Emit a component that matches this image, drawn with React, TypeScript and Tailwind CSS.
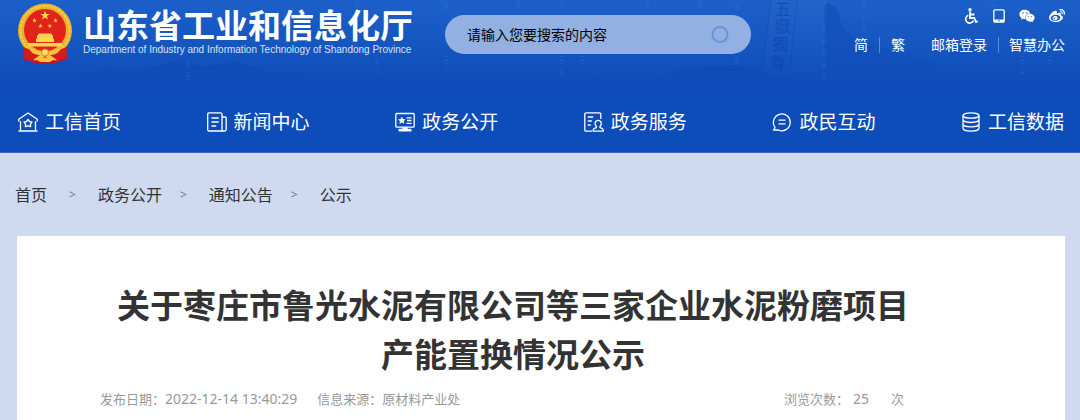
import type { ReactNode } from "react";
import { FaWeibo, FaWeixin } from "react-icons/fa";

const iconProps = {
  viewBox: "0 0 20 20",
  fill: "none",
  stroke: "currentColor",
  strokeWidth: 1.3,
  strokeLinejoin: "round" as const,
  "aria-hidden": true,
  className: "h-5 w-5 shrink-0",
};

const navItems: { label: string; icon: ReactNode }[] = [
  {
    label: "工信首页",
    icon: (
      <svg {...iconProps}>
        <path d="M.7 9.500V7.200L10 1l9.300 6.200v2.300M2.500 9v9.500M17.500 9v9.500M.5 19h19" />
        <path d="m10 7.500 1.500 2 2.500.6-1.600 2 .2 2.600-2.600-.9-2.600.9.2-2.600-1.600-2 2.500-.6z" />
      </svg>
    ),
  },
  {
    label: "新闻中心",
    icon: (
      <svg {...iconProps}>
        <path d="M15 19H2a1.3 1.3 0 0 1-1.3-1.3V1.8A1.2 1.2 0 0 1 2 .8h11.5A1.4 1.4 0 0 1 15 2.2zM15 5h3a1.2 1.2 0 0 1 1.2 1.2v11.3A1.6 1.6 0 0 1 17.7 19H15" />
        <path d="M4.5 6h7.2M4.5 10h7.2M4.5 14h4.7" />
      </svg>
    ),
  },
  {
    label: "政务公开",
    icon: (
      <svg {...iconProps}>
        <rect x=".8" y="1.5" width="18.4" height="13.7" rx="1" />
        <path d="M11.5 5.8h5M12 8.5h4.5M11.5 11.3h5" />
        <path
          d="m6.8 5 1 2.3 2.4.2-1.8 1.6.6 2.4-2.2-1.3-2.1 1.3.5-2.4-1.8-1.6 2.5-.2zM7.5 15.5h5V17h3.7v2.3H3.8V17h3.7z"
          fill="currentColor"
          strokeWidth=".4"
        />
      </svg>
    ),
  },
  {
    label: "政务服务",
    icon: (
      <svg {...iconProps}>
        <path d="M16.8 7V2A1.2 1.2 0 0 0 15.6.8H2A1.2 1.2 0 0 0 .8 2v16A1.2 1.2 0 0 0 2 19.2h6M3.8 5h5.4M3.8 9h4M3.8 13h3" />
        <path d="M12.300 14.300c-2-2-1.400-6 1.900-6s3.900 4 1.900 6c-.6 1 .2 1.600 1.300 1.900 1.300.4 2 1.300 2 3H9c0-1.700.7-2.600 2-3 1.100-.3 1.900-.9 1.300-1.900z" />
      </svg>
    ),
  },
  {
    label: "政民互动",
    icon: (
      <svg {...iconProps}>
        <path d="M3 15.300A8.400 8.400 0 1 1 6.300 18H1.500c.9-.8 1.300-1.600 1.500-2.700zM6.500 8.200h7M6.500 11.800h7" />
      </svg>
    ),
  },
  {
    label: "工信数据",
    icon: (
      <svg {...iconProps}>
        <ellipse cx="10" cy="3.500" rx="8" ry="2.700" />
        <path d="M2 3.500v12.800c0 1.600 3.500 2.900 8 2.900s8-1.300 8-2.900V3.500M2 7.600c0 1.600 3.500 2.900 8 2.900s8-1.300 8-2.900M2 12c0 1.600 3.500 2.900 8 2.900s8-1.300 8-2.900" />
      </svg>
    ),
  },
];

const crumbs = ["政务公开", "通知公告", "公示"];

// faint dashed columns falling through the banner: x, top, bottom
const digitColumns: [number, number, number][] = [
  [188, 60, 84],
  [357, 0, 8],
  [377, 58, 74],
  [446, 2, 12],
  [446, 56, 72],
  [518, 0, 13],
  [562, 0, 12],
  [562, 56, 78],
  [582, 56, 70],
  [647, 0, 13],
  [700, 0, 12],
  [737, 2, 14],
  [737, 56, 66],
  [824, 24, 80],
  [864, 0, 30],
  [993, 0, 6],
  [1022, 56, 74],
  [1050, 56, 64],
];

function BannerBackdrop() {
  return (
    <svg
      className="absolute inset-0 h-full w-full"
      viewBox="0 0 1080 90"
      preserveAspectRatio="xMidYMid slice"
      aria-hidden="true"
    >
      <defs>
        <linearGradient id="hill" x1="0" y1="0" x2="0" y2="1">
          <stop offset="0" stopColor="#0b3fa9" stopOpacity=".4" />
          <stop offset="1" stopColor="#0d4db9" stopOpacity=".1" />
        </linearGradient>
        <linearGradient id="stone" x1="0" y1="0" x2="0" y2="1">
          <stop offset="0" stopColor="#2f6bcb" stopOpacity=".35" />
          <stop offset="1" stopColor="#2f6bcb" stopOpacity="0" />
        </linearGradient>
      </defs>
      <path d="M60 78 105 68l30 3 40-9 28 5 34-5 30 9 38 2 30 8H60z" fill="url(#hill)" />
      <path
        d="M560 84c25 0 22-7 36-7 12 0 20 4 34 4 24 0 40-10 62-13 18-2 40-5 56 0 20 4 34 12 56 16z"
        fill="url(#hill)"
      />
      <path
        d="M824 90V6l4-3 8 4 3 10 4 10 8 8 10 10 30 4 12 8 30 4 16 10 40 19z"
        fill="url(#hill)"
      />
      <path d="M762 76 772 0h54l-2 80z" fill="url(#stone)" />
      <path d="m762 72 9-72M789 80l8-80" stroke="#0b3fa9" opacity=".3" />
      <g
        fill="#0a3da4"
        opacity=".5"
        fontSize="16"
        className="font-['Liberation_Serif','Noto_Sans_CJK_TC',serif]"
      >
        <text x="775" y="15">五</text>
        <text x="774" y="32">嶽</text>
        <text x="772" y="50">獨</text>
        <text x="770" y="69">尊</text>
      </g>
      <g stroke="#5a93e6" strokeWidth="4" strokeDasharray="1 2 3 1 1 4" opacity=".12">
        {digitColumns.map(([x, top, bottom]) => (
          <path key={`${x}-${top}`} d={`M${x} ${top}V${bottom}`} />
        ))}
      </g>
    </svg>
  );
}

const star = "M0-10 2.400-3.200 9.500-3.100 3.800 1.200 5.900 8.100 0 4-5.900 8.100-3.800 1.200-9.500-3.100-2.400-3.200z";

function Emblem() {
  return (
    <svg className="h-[60px] w-[56px] shrink-0" viewBox="0 0 56 60" role="img" aria-label="国徽">
      <path d="M7 44h42l1 13-8 1-3 2H17l-3-2-8-1z" fill="#c8161d" />
      <circle cx="28" cy="27.500" r="27" fill="#e9b12d" />
      <circle cx="28" cy="27.500" r="24.500" fill="none" stroke="#f5cb48" strokeWidth="2" strokeDasharray="3 1" />
      <circle cx="28" cy="27" r="21" fill="#e2231a" />
      <g fill="#fbd84b">
        <path d={star} transform="translate(28 12.500) scale(.5)" />
        <path d={star} transform="translate(17.500 17.500) scale(.24)" />
        <path d={star} transform="translate(38.500 17.500) scale(.24)" />
        <path d={star} transform="translate(23.500 23) scale(.24)" />
        <path d={star} transform="translate(32.800 23) scale(.24)" />
        <path d="m20 33 2-2.500h12l2 2.500v2.500h1V39H19v-3.500h1zM11 40h34v3.500H11z" />
      </g>
      <path d="M6 44c8 2 12 7 22 7s14-5 22-7l-1 10-7 4H14l-7-4z" fill="#d51c1c" />
      <path
        d="M12 45c6 1 9 4 16 4s10-3 16-4c-2 5-6 7-11 7l7 5c-5 1-9-1-12-4-3 3-7 5-12 4l7-5c-5 0-9-2-11-7z"
        fill="#f3c43e"
      />
      <circle cx="28" cy="49.500" r="3.500" fill="#f9dc68" stroke="#cf8f1d" />
      <path d="M20 57q8-5 16 0l-3 2H23z" fill="#f3c43e" />
    </svg>
  );
}

function Divider() {
  return <span className="h-4 w-px bg-[#4b92dc]" />;
}

function TopLinks() {
  return (
    <div className="ml-auto flex flex-col items-end pt-2 text-white">
      <div className="flex h-4 items-center gap-[14px]">
        <a href="#accessible" aria-label="无障碍">
          <svg className="h-4 w-4" viewBox="0 0 14 16" fill="none" stroke="currentColor" aria-hidden="true">
            <circle cx="6" cy="1.700" r="1.700" fill="currentColor" stroke="none" />
            <path d="M6 3.500V10h4.300l1.700 4 1.800-.8M6 6.500h4.500" strokeWidth="1.800" />
            <path d="M4.200 7.200A4.100 4.100 0 1 0 9.500 12.700" strokeWidth="1.600" />
          </svg>
        </a>
        <a href="#mobile" aria-label="移动版">
          <svg className="h-[14px] w-3" viewBox="0 0 12 14" fill="none" stroke="currentColor" aria-hidden="true">
            <rect x=".8" y=".8" width="10.400" height="12.400" rx="1.200" strokeWidth="1.300" />
            <path d="M1 10.500h10v2.500H1z" fill="currentColor" stroke="none" />
            <circle cx="6" cy="11.700" r=".8" fill="#1a5ac4" stroke="none" />
          </svg>
        </a>
        <a href="#wechat" aria-label="微信">
          <FaWeixin className="h-4 w-4" />
        </a>
        <a href="#weibo" aria-label="微博">
          <FaWeibo className="h-4 w-4" />
        </a>
      </div>
      <div className="mt-[11px] flex items-center text-sm leading-5">
        <a href="#jian" className="mr-[11px]">简</a>
        <Divider />
        <a href="#fan" className="mr-[26px] ml-[11px]">繁</a>
        <a href="#mail" className="mr-[11px]">邮箱登录</a>
        <Divider />
        <a href="#office" className="ml-[10px]">智慧办公</a>
      </div>
    </div>
  );
}

function SearchBox() {
  return (
    <form
      role="search"
      onSubmit={(e) => e.preventDefault()}
      className="mt-[15px] ml-8 flex h-[39px] w-[306px] items-center rounded-full bg-[#92b0e2] pr-[21px] pl-[22px]"
    >
      <input
        type="text"
        aria-label="搜索"
        placeholder="请输入您要搜索的内容"
        className="min-w-0 flex-1 bg-transparent text-sm text-black outline-none placeholder:text-black"
      />
      <button type="submit" aria-label="搜索">
        <svg className="h-5 w-5" viewBox="0 0 20 20" fill="none" stroke="#6b93da" strokeWidth="2" aria-hidden="true">
          <circle cx="10" cy="9.500" r="7.500" />
          <path d="m14.500 14.500 2 2" />
        </svg>
      </button>
    </form>
  );
}

export default function App() {
  return (
    <div className="flex min-h-screen flex-col bg-[#cfdaf1] font-['Noto_Sans','Noto_Sans_CJK_SC',sans-serif]">
      <header className="border-b border-[#3566c4] bg-[#0d4db9]">
        {/* Banner */}
        <div className="relative overflow-hidden bg-linear-to-b from-[#1c60c9] to-[#0e4bb8]">
          <BannerBackdrop />
          <div className="relative flex h-[90px] items-start pr-[15px] pl-[17px]">
            <a href="#home" className="flex items-start gap-[10px] pt-[3px] text-white">
              <Emblem />
              <span className="pt-[5px]">
                <span className="block text-[33px] leading-[36px] font-bold">山东省工业和信息化厅</span>
                <span className="block font-['Liberation_Sans',sans-serif] text-[10px] leading-3 text-[#d5e3fa]">
                  Department of Industry and Information Technology of Shandong Province
                </span>
              </span>
            </a>
            <SearchBox />
            <TopLinks />
          </div>
        </div>

        {/* Main nav */}
        <nav className="flex h-[62px] items-center justify-between pt-[2px] pr-4 pl-[18px] text-white">
          {navItems.map((item) => (
            <a key={item.label} href="#nav" className="flex items-center gap-[7px] text-[19px] leading-7">
              {item.icon}
              {item.label}
            </a>
          ))}
        </nav>
      </header>

      {/* Breadcrumb */}
      <nav aria-label="breadcrumb" className="flex h-[83px] items-center gap-[18px] pl-[15px] text-base text-[#333]">
        <a href="#home" className="pr-1">首页</a>
        {crumbs.map((crumb) => (
          <span key={crumb} className="flex items-center gap-[22px]">
            <span className="text-xs text-[#777]">&gt;</span>
            <a href="#crumb">{crumb}</a>
          </span>
        ))}
      </nav>

      {/* Article */}
      <main className="mr-[15px] ml-[17px] flex-1 bg-white pt-[45px] pr-[139px] pb-3 pl-[83px]">
        <h1 className="text-center text-[33px] leading-[49px] font-bold text-[#333]">
          关于枣庄市鲁光水泥有限公司等三家企业水泥粉磨项目
          <br />
          产能置换情况公示
        </h1>
        <div className="mt-[10px] flex items-center pr-[22px] text-[13px] leading-5 text-[#999]">
          <span>
            发布日期：<time className="text-sm">2022-12-14 13:40:29</time>
          </span>
          <span className="ml-5">信息来源：原材料产业处</span>
          <span className="ml-auto">浏览次数：</span>
          <span className="ml-1 text-sm">25</span>
          <span className="ml-[22px]">次</span>
        </div>
      </main>
    </div>
  );
}
